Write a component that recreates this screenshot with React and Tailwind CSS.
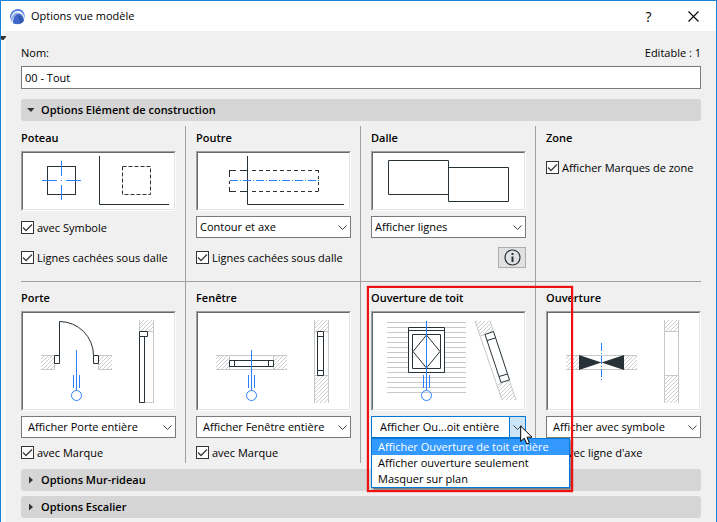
import React, { useId } from "react";

const INK = "#263238";
const BLUE = "#2a7fff";
const PALE = "#c8c8c8";

function Hatch({ points, id }) {
  return <polygon points={points} fill={`url(#${id})`} />;
}

function Drawing({ height, children }) {
  return (
    <div className="border border-t-[#a0a0a0] border-l-[#a0a0a0] border-r-white border-b-white">
      <div className="flex justify-center border border-t-[#696969] border-l-[#696969] border-r-[#e3e3e3] border-b-[#e3e3e3] bg-white">
        <svg
          className={height === 60 ? "h-14 w-[151px]" : "h-24 w-[151px]"}
          viewBox={`2 2 151 ${height - 4}`}
          fill="none"
          stroke={INK}
          strokeWidth="1"
          aria-hidden="true"
        >
          {children}
        </svg>
      </div>
    </div>
  );
}

function HatchDefs({ id }) {
  return (
    <defs>
      <pattern id={id} width="4" height="4" patternUnits="userSpaceOnUse">
        <path d="M-1 1L1 -1M0 4L4 0M3 5L5 3" stroke={PALE} strokeWidth="0.9" />
      </pattern>
    </defs>
  );
}

function Marker() {
  return (
    <g stroke={BLUE}>
      <path d="M52.5 64V77M58.5 64V77" />
      <circle cx="55.5" cy="84.5" r="5" />
    </g>
  );
}

function ColumnDrawing() {
  return (
    <Drawing height={60}>
      <rect x="26.5" y="15.5" width="28" height="28" />
      <path d="M21 29.5H36M40 29.5H41M45 29.5H60M40.5 10V25M40.5 34V49" stroke={BLUE} />
      <path d="M78.5 5V53.5H148" />
      <path d="M101.5 15.5H129.5V43.5H101.5Z" strokeDasharray="4 2" />
    </Drawing>
  );
}

function BeamDrawing() {
  return (
    <Drawing height={60}>
      <path d="M51.5 5V53.5H148" />
      <path d="M33 19.5H40M44 19.5H51M33 40.5H40M44 40.5H51M33.5 19V26M33.5 30V33M33.5 36V41" />
      <path d="M56 19.5H122.5M56 40.5H122.5" strokeDasharray="4 3" />
      <path d="M122.5 19V41" strokeDasharray="3 3" />
      <path d="M34 29.5H123" stroke={BLUE} strokeDasharray="8 2 1 2" />
    </Drawing>
  );
}

function SlabDrawing() {
  return (
    <Drawing height={60}>
      <path d="M17.5 9.5H77.5V43.5H17.5ZM77.5 16.5H137.5V50.5H77.5Z" />
    </Drawing>
  );
}

function DoorDrawing() {
  const id = useId();
  return (
    <Drawing height={100}>
      <HatchDefs id={id} />
      <g stroke="none">
        <Hatch id={id} points="20,44 34,44 34,59 20,59" />
        <Hatch id={id} points="77,44 91,44 91,59 77,59" />
        <Hatch id={id} points="118,9 133,9 133,21 118,21" />
      </g>
      <path d="M20 44.5H33.5M20 58.5H33.5V52M91 44.5H77.5M91 58.5H77.5V52M118.5 9V20M132.5 9V91.5H123M126 20.5H132" stroke={PALE} />
      <path d="M38.5 45V10.5A34 34 0 0 1 72.5 44.5" />
      <path d="M33.5 44.5H38.5V52.5H33.5ZM72.5 44.5H77.5V52.5H72.5ZM118.5 20.5H126.5V25.5H118.5ZM118.5 25.5H123.5V91.5H118.5Z" fill="white" />
      <path d="M55.5 39V79" stroke={BLUE} />
      <Marker />
    </Drawing>
  );
}

function WindowDrawing() {
  const id = useId();
  return (
    <Drawing height={100}>
      <HatchDefs id={id} />
      <g stroke="none">
        <Hatch id={id} points="20,44 34,44 34,59 20,59" />
        <Hatch id={id} points="77,44 91,44 91,59 77,59" />
        <Hatch id={id} points="118,9 133,9 133,21 118,21" />
        <Hatch id={id} points="118,64 133,64 133,92 118,92" />
      </g>
      <path d="M20 44.5H91M20 58.5H91M33.5 44V59M77.5 44V59M118.5 9V92M132.5 9V92M118 20.5H133M118 64.5H133" stroke={PALE} />
      <path d="M33.5 49.5H77.5V55.5H33.5ZM38.5 49V56M72.5 49V56M121.5 20.5H127.5V64.5H121.5ZM121 25.5H128M121 59.5H128" />
      <path d="M55.5 39V79" stroke={BLUE} />
      <Marker />
    </Drawing>
  );
}

function RoofDrawing() {
  const id = useId();
  return (
    <Drawing height={100}>
      <HatchDefs id={id} />
      <path
        d="M16 11.5H95M16 16.5H95M16 21.5H95M16 26.5H95M16 31.5H95M16 36.5H95M16 41.5H95M16 46.5H95M16 51.5H95M16 56.5H95M16 61.5H95M16 66.5H95M16 71.5H95M16 76.5H95M16 81.5H95"
        stroke={PALE}
      />
      <path d="M37.5 16.5H73.5V61.5H37.5Z" fill="white" />
      <path d="M37 19.5H74M41.5 23.5H69.5V57.5H41.5Z" />
      <path d="M55.5 24L69 40.5L55.5 57L42 40.5Z" />
      <path d="M55.5 10V79" stroke={BLUE} />
      <Marker />
      <g stroke="none">
        <Hatch id={id} points="104,10 119,10 122.5,20.5 109,25" />
        <Hatch id={id} points="126.5,74 138.5,70 145,89 131,89" />
      </g>
      <path d="M104 10L131 89M119 10L122.5 20.5M138.5 70L145 89M109 25L114 23.5M126.5 74L131 72" stroke={PALE} />
      <path d="M114 23.5L122.5 20.5L138.5 69L130 71.5ZM116 29.5L124.5 27M128 65.5L136.5 63" />
    </Drawing>
  );
}

function OpeningDrawing() {
  const id = useId();
  return (
    <Drawing height={100}>
      <HatchDefs id={id} />
      <g stroke="none">
        <Hatch id={id} points="20,44 34,44 34,59 20,59" />
        <Hatch id={id} points="77,44 91,44 91,59 77,59" />
        <Hatch id={id} points="118,9 133,9 133,21 118,21" />
        <Hatch id={id} points="118,64 133,64 133,92 118,92" />
      </g>
      <path d="M20 44.5H91M20 58.5H91M118.5 9V92M132.5 9V92M118 20.5H133M118 64.5H133" stroke={PALE} />
      <path d="M33 44L55.5 51.5L33 59ZM78 44L55.5 51.5L78 59Z" fill={INK} stroke="none" />
      <path d="M55.5 32V71" stroke={BLUE} strokeDasharray="8 2 1 2" />
    </Drawing>
  );
}

function Check({ label }) {
  return (
    <label className="flex items-center gap-[3px] leading-[13px] whitespace-nowrap">
      <span className="grid shrink-0">
        <input
          type="checkbox"
          defaultChecked
          className="col-start-1 row-start-1 size-[13px] appearance-none border border-[#333] bg-white"
        />
        <svg className="pointer-events-none col-start-1 row-start-1 size-[13px]" viewBox="0 0 13 13" fill="none" stroke="#3c3c3c" strokeWidth="1.3" aria-hidden="true">
          <path d="M2 6.5L5 9.5L11 3.5" />
        </svg>
      </span>
      {label}
    </label>
  );
}

function Chevron({ className }) {
  return (
    <svg className={className} viewBox="0 0 9 5" fill="none" stroke="#444" strokeWidth="1" aria-hidden="true">
      <path d="M0.5 0.5L4.5 4.5L8.5 0.5" />
    </svg>
  );
}

function Select({ label, value, indent }) {
  return (
    <div className="grid items-center">
      <select
        aria-label={label}
        className={`col-start-1 row-start-1 h-[22px] w-full appearance-none border border-[#7a7a7a] bg-white pr-4 ${indent ? "pl-[6px]" : "pl-[3px]"}`}
      >
        <option>{value}</option>
      </select>
      <Chevron className="pointer-events-none col-start-1 row-start-1 mr-1 h-[5px] w-[9px] justify-self-end" />
    </div>
  );
}

function OpenSelect() {
  return (
    <div className="relative z-10">
      <div className="grid">
        <select
          aria-label="Ouverture de toit"
          className="col-start-1 row-start-1 h-[22px] w-full appearance-none border border-[#0078d7] bg-white pr-4 pl-[8px]"
        >
          <option>Afficher Ou...oit entière</option>
        </select>
        <span className="pointer-events-none col-start-1 row-start-1 flex w-[17px] items-center justify-center justify-self-end border border-[#0078d7] bg-[#cce4f7]">
          <Chevron className="h-[5px] w-[9px]" />
        </span>
      </div>
      <ul
        role="listbox"
        aria-label="Ouverture de toit"
        className="absolute top-full left-0 w-[199px] border border-[#0078d7] bg-white leading-4 whitespace-nowrap shadow-[2px_2px_2px_rgba(0,0,0,0.45)]"
      >
        <li role="option" aria-selected="true" className="bg-[#3399ff] pl-[6px] text-white">
          Afficher Ouverture de toit entière
        </li>
        <li role="option" aria-selected="false" className="pl-[6px]">
          Afficher ouverture seulement
        </li>
        <li role="option" aria-selected="false" className="pl-[6px]">
          Masquer sur plan
        </li>
      </ul>
      <svg className="absolute top-[9px] right-[-7px] h-[20px] w-[13px]" viewBox="0 0 13 20" aria-hidden="true">
        <path d="M0.7 1V16.5L4.3 13.2L6.8 19L9.4 17.9L7 12.2H12Z" fill="white" stroke="black" strokeWidth="1" />
      </svg>
    </div>
  );
}

function Cell({ title, place, children }) {
  return (
    <section className={`flex min-w-0 flex-col ${place}`}>
      <h3 className="mb-[5px] leading-4 font-semibold">{title}</h3>
      {children}
    </section>
  );
}

const FIRST = "border-r border-[#a0a0a0] pr-[9px]";
const MIDDLE = "border-r border-[#a0a0a0] pr-[9px] pl-[10px]";
const LAST = "pl-[10px]";

function SectionBar({ title, open }) {
  return (
    <h2>
      <button
        type="button"
        aria-expanded={Boolean(open)}
        className="flex h-[22px] w-full items-center gap-[5px] rounded-[3px] bg-[#d5d5d5] pl-[5px] font-semibold"
      >
        <svg className="size-[10px]" viewBox="0 0 10 10" fill="#333" aria-hidden="true">
          <path d={open ? "M1 3H8.5L5 7Z" : "M3 1.5V8.5L7 5Z"} />
        </svg>
        {title}
      </button>
    </h2>
  );
}

export default function App() {
  return (
    <div className="flex min-h-screen flex-col overflow-hidden border border-b-0 border-[#1883d7] bg-[#f0f0f0] font-['Open_Sans','Noto_Sans',sans-serif] text-[11px] text-black">
      <header className="flex h-[30px] items-center bg-white pl-2">
        <svg className="mr-[5px] size-[17px]" viewBox="0 0 17 17" aria-hidden="true">
          <path d="M1 10C0.5 5 4 1 9 1C13.5 1 16.2 4.5 16 9C15.9 12 15 13.5 13.5 14.5L8 16H5C2.5 15 1 13 1 10Z" fill="#e3eaf8" />
          <path d="M1 9.5C1 5 4.5 1 9 1C13.5 1 16 5 15.8 10C14.5 5 12 2.8 9 2.8C5 2.8 2.5 6 1.5 11Z" fill="#4a7be0" />
          <path d="M1.8 11.5C3 7.5 5.5 5 8.5 4.2L7 6.5C5 8 3.6 10.5 3 14Z" fill="#86a8ec" />
          <path d="M4 15C4 10 6 6 9.5 5.5C12.5 5.5 14.5 8.5 15 12.5C13.5 15 11 16.2 8.5 16.2C6.5 16.2 5 15.8 4 15Z" fill="#3f68ca" />
          <path d="M9 8C11 7 13 9 14.5 12.5C13.5 14 13 15 11.5 15.7Z" fill="#3358ac" />
        </svg>
        <h1 className="flex-1">Options vue modèle</h1>
        <button type="button" aria-label="Aide" className="h-[30px] w-[45px] text-[14px]">
          ?
        </button>
        <button type="button" aria-label="Fermer" className="flex h-[30px] w-[45px] items-center justify-center">
          <svg className="size-[11px]" viewBox="0 0 11 11" fill="none" stroke="black" strokeWidth="1.1" aria-hidden="true">
            <path d="M0.5 0.5L10.5 10.5M10.5 0.5L0.5 10.5" />
          </svg>
        </button>
      </header>
      <div className="flex flex-1">
        <aside className="w-[5px] bg-[#f9f9f9] pt-[5px]">
          <svg className="h-[4px] w-[5px]" viewBox="0 0 5 4" fill="#333" aria-hidden="true">
            <path d="M0 0H5V1L2.5 4H1L0 3Z" />
          </svg>
        </aside>
        <main className="min-w-0 flex-1 pt-[14px] pr-[15px] pl-[15px]">
          <div className="flex justify-between leading-4">
            <label htmlFor="nom">Nom:</label>
            <span>Editable : 1</span>
          </div>
          <input
            id="nom"
            type="text"
            defaultValue="00 - Tout"
            className="mt-[5px] mb-[10px] block h-[23px] w-full border border-[#7a7a7a] bg-white px-[3px]"
          />
          <SectionBar title="Options Elément de construction" open />

          <div className="mt-[5px] grid grid-cols-[165fr_175fr_175fr_165fr] border-b border-[#a0a0a0] *:h-[155px] *:pt-[4px]">
            <Cell title="Poteau" place={FIRST}>
              <ColumnDrawing />
              <div className="mt-[10px] flex flex-col gap-[17px]">
                <Check label="avec Symbole" />
                <Check label="Lignes cachées sous dalle" />
              </div>
            </Cell>
            <Cell title="Poutre" place={MIDDLE}>
              <BeamDrawing />
              <div className="mt-[5px] flex flex-col gap-[13px]">
                <Select label="Poutre" value="Contour et axe" />
                <Check label="Lignes cachées sous dalle" />
              </div>
            </Cell>
            <Cell title="Dalle" place={MIDDLE}>
              <SlabDrawing />
              <div className="mt-[5px] flex flex-col gap-[9px]">
                <Select label="Dalle" value="Afficher lignes" />
                <button
                  type="button"
                  aria-label="Informations"
                  className="flex h-[21px] w-[28px] items-center justify-center self-end border border-[#adadad] bg-[#e1e1e1]"
                >
                  <svg className="size-[17px]" viewBox="0 0 17 17" fill="none" stroke={INK} aria-hidden="true">
                    <circle cx="8.5" cy="8.5" r="7.5" strokeWidth="1.2" />
                    <path d="M8.5 4V6M8.5 7.5V13" strokeWidth="2" />
                  </svg>
                </button>
              </div>
            </Cell>
            <Cell title="Zone" place={LAST}>
              <div className="mt-[10px]">
                <Check label="Afficher Marques de zone" />
              </div>
            </Cell>
          </div>

          <div className="mb-[6px] grid grid-cols-[165fr_175fr_175fr_165fr] *:h-[181px] *:pt-[8px]">
            <Cell title="Porte" place={FIRST}>
              <DoorDrawing />
              <div className="mt-[5px] flex flex-col gap-[8px]">
                <Select label="Porte" value="Afficher Porte entière" indent />
                <Check label="avec Marque" />
              </div>
            </Cell>
            <Cell title="Fenêtre" place={MIDDLE}>
              <WindowDrawing />
              <div className="mt-[5px] flex flex-col gap-[8px]">
                <Select label="Fenêtre" value="Afficher Fenêtre entière" indent />
                <Check label="avec Marque" />
              </div>
            </Cell>
            <Cell title="Ouverture de toit" place={`relative ${MIDDLE}`}>
              <RoofDrawing />
              <div className="mt-[5px]">
                <OpenSelect />
              </div>
              <div className="pointer-events-none absolute top-[4px] left-[6px] z-20 h-[206px] w-[206px] border-2 border-[#ee1111] shadow-[0_0_1px_#ff0000]" />
            </Cell>
            <Cell title="Ouverture" place={LAST}>
              <OpeningDrawing />
              <div className="mt-[5px] flex flex-col gap-[8px]">
                <Select label="Ouverture" value="Afficher avec symbole" indent />
                <Check label="avec ligne d'axe" />
              </div>
            </Cell>
          </div>

          <div className="flex flex-col gap-[5px]">
            <SectionBar title="Options Mur-rideau" />
            <SectionBar title="Options Escalier" />
          </div>
        </main>
      </div>
    </div>
  );
}
